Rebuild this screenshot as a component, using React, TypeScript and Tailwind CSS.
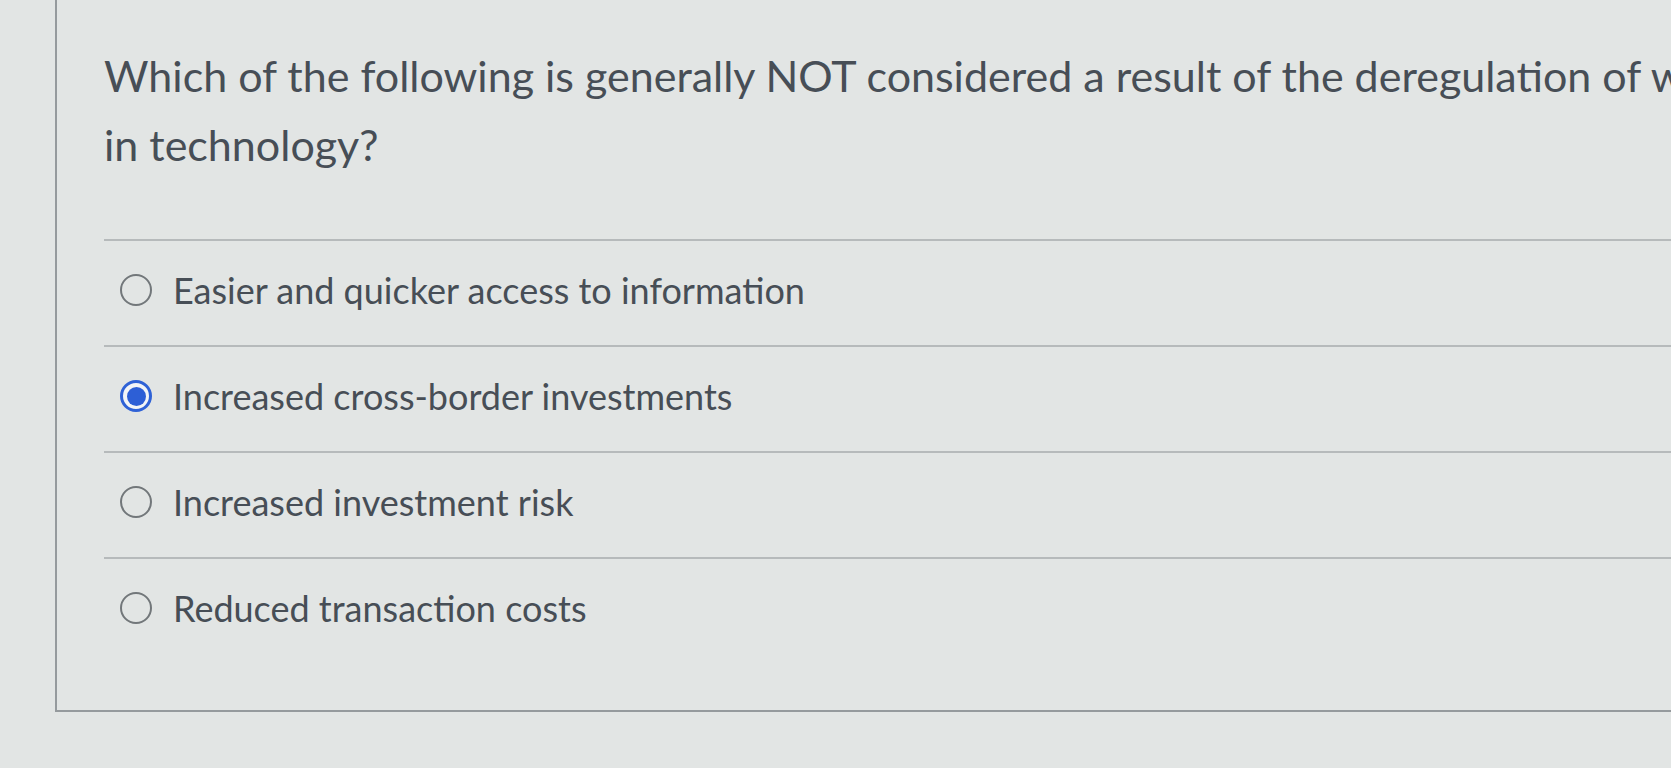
const options = [
  { label: 'Easier and quicker access to information', checked: false },
  { label: 'Increased cross-border investments', checked: true },
  { label: 'Increased investment risk', checked: false },
  { label: 'Reduced transaction costs', checked: false },
]

function Radio({ checked }: { checked: boolean }) {
  if (checked) {
    return (
      <span className="flex h-[32px] w-[32px] shrink-0 items-center justify-center rounded-full border-[3px] border-[#2f62d6] bg-[#f3f5f7]">
        <span className="block h-[19px] w-[19px] rounded-full bg-[#2d5fd6]" />
      </span>
    )
  }
  return <span className="block h-[32px] w-[32px] shrink-0 rounded-full border-2 border-[#72777a]" />
}

export default function App() {
  return (
    <div className="h-[768px] w-full overflow-hidden bg-[#e2e5e4] font-['Lato','Noto_Sans',sans-serif] text-[#474e56]">
      <div className="ml-[55px] h-[712px] overflow-hidden border-b-2 border-l-2 border-[#959a9d] pl-[47px]">
        <div className="whitespace-nowrap pt-[41px] text-[43px] leading-[69px]">
          <p>Which of the following is generally NOT considered a result of the deregulation of world markets and advances</p>
          <p>in technology?</p>
        </div>

        <ul className="mt-[60px]">
          {options.map((o) => (
            <li
              key={o.label}
              className="flex h-[106px] items-start gap-[21px] border-t-2 border-[#b6babb] pl-[16px] pt-[29px]"
            >
              <div className="flex h-[40px] items-center">
                <Radio checked={o.checked} />
              </div>
              <span className="text-[36px] leading-[40px]">{o.label}</span>
            </li>
          ))}
        </ul>
      </div>
    </div>
  )
}
